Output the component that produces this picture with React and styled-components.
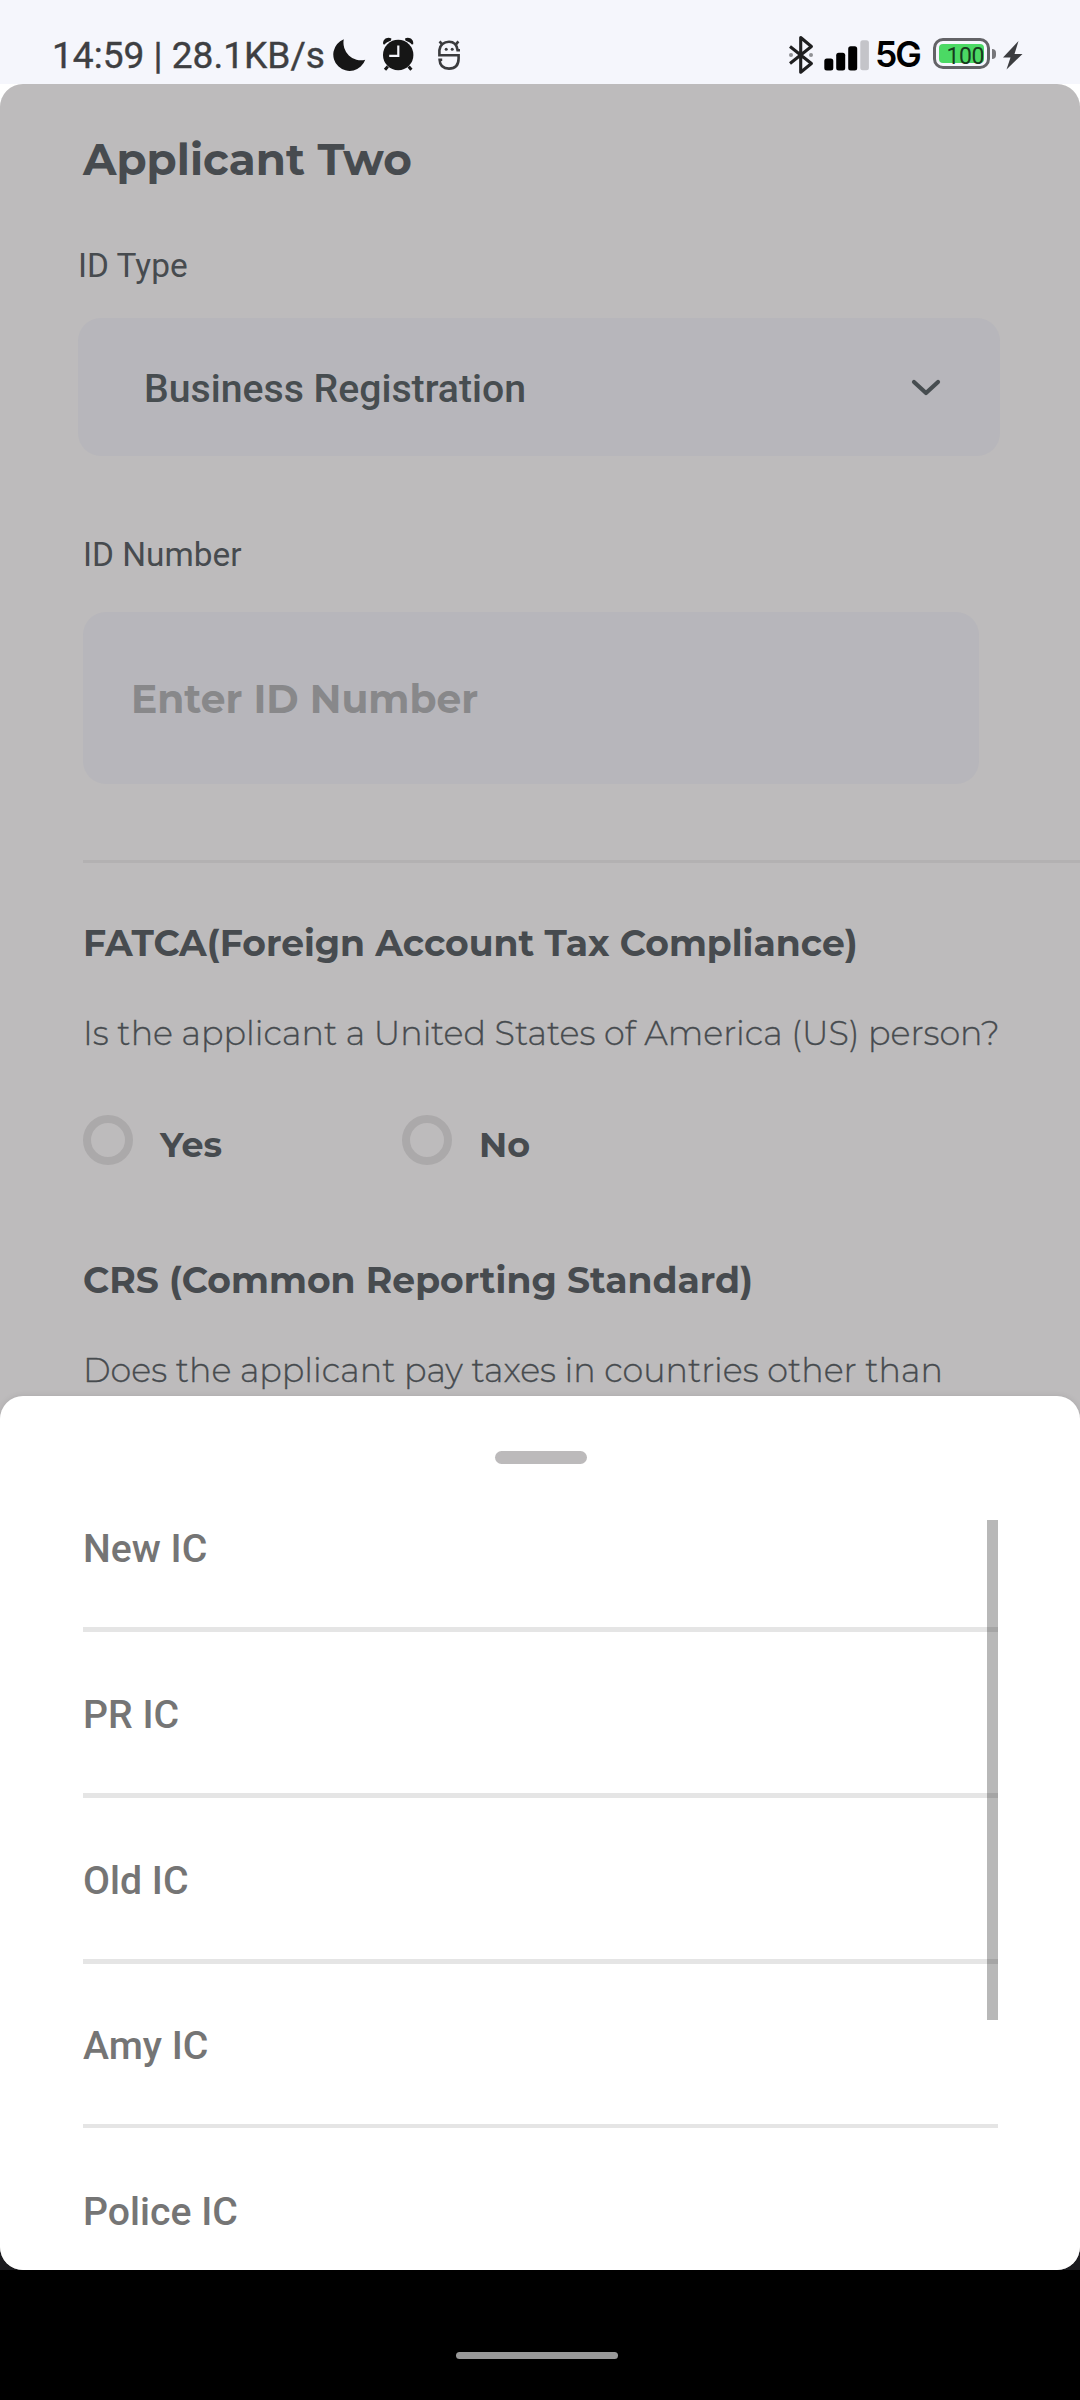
import React from "react";
import styled, { createGlobalStyle } from "styled-components";

const heading = `"Montserrat", Inter, sans-serif`;
const body = `Roboto, "Noto Sans", sans-serif`;
const ink = "#474b4f";

const Global = createGlobalStyle`
  * { box-sizing: border-box; }
  body { margin: 0; background: #000; font-family: ${body}; }
`;

const Phone = styled.div`
  width: 1080px;
  height: 2400px;
  display: flex;
  flex-direction: column;
  background: #000;
  overflow: hidden;
`;

/* ---------- status bar ---------- */

const StatusBar = styled.header`
  height: 84px;
  flex: none;
  display: flex;
  justify-content: space-between;
  padding: 0 56px 0 52px;
  background: #f5f6fc;
`;

const StatusGroup = styled.div`
  display: flex;
  align-items: flex-start;
`;

const Clock = styled.span`
  margin-top: 31px;
  width: 280px;
  font-size: 37.1px;
  line-height: 50px;
  color: #3e3f42;
  white-space: nowrap;
  -webkit-text-stroke: 0.4px #3e3f42;
`;

const Glyph = styled.svg`
  flex: none;
  display: block;
  margin-top: ${(p) => p.$top}px;
  margin-left: ${(p) => p.$gap || 0}px;
`;

const Network = styled.span`
  margin-top: 30px;
  margin-left: 5px;
  width: 58px;
  font: 600 35.5px/50px Inter, sans-serif;
  letter-spacing: -2px;
  color: #000;
`;

const Battery = styled.div`
  display: flex;
  align-items: center;
  margin-top: 38px;
`;

const BatteryShell = styled.div`
  width: 57px;
  height: 31px;
  padding: 3px;
  border: 3px solid #636367;
  border-radius: 10px;
`;

const BatteryFill = styled.div`
  width: 45px;
  height: 19px;
  border-radius: 4px;
  background: #4bd964;
  color: #173a1d;
  font-size: 23px;
  line-height: 25px;
  text-align: right;
  letter-spacing: -0.4px;
`;

const BatteryTip = styled.div`
  width: 4px;
  height: 10px;
  margin-left: 2px;
  border-radius: 0 4px 4px 0;
  background: #77777b;
`;

/* ---------- form ---------- */

const Stage = styled.main`
  height: 2186px;
  flex: none;
  background: linear-gradient(#fff 50%, #1c1c20 50%);
`;

const AppWindow = styled.div`
  height: 100%;
  display: flex;
  flex-direction: column;
  border-radius: 23px;
  overflow: hidden;
  background: #bdbbbc;
`;

const Form = styled.section`
  height: 1312px;
  flex: none;
  display: flex;
  flex-direction: column;
  align-items: flex-start;
  padding: 51px 0 0 83px;
  color: ${ink};
`;

const Title = styled.h1`
  margin: 0;
  font: 700 43.7px/50px ${heading};
  white-space: nowrap;
`;

const Label = styled.label`
  margin-top: ${(p) => p.$gap}px;
  margin-left: ${(p) => p.$shift || 0}px;
  font-size: 33.4px;
  line-height: 50px;
`;

const Select = styled.button`
  margin: 27px 0 0 -5px;
  width: 922px;
  height: 138px;
  border: 0;
  border-radius: 23px;
  padding: 3px 59px 0 66px;
  display: flex;
  align-items: center;
  justify-content: space-between;
  background: #b7b6bb;
  color: #474d50;
  font: 500 39.2px/50px ${body};
`;

const Field = styled.div`
  margin-top: 32px;
  width: 896px;
  height: 172px;
  border-radius: 23px;
  padding: 2px 0 0 48px;
  display: flex;
  align-items: center;
  background: #b7b6bb;
  color: #88888a;
  font: 700 39.2px/50px ${heading};
`;

const Divider = styled.hr`
  align-self: stretch;
  margin: 76px 0 0;
  height: 3px;
  border: 0;
  background: #b3b1b2;
`;

const Heading = styled.h2`
  margin: ${(p) => p.$gap}px 0 0;
  font: 700 36.13px/50px ${heading};
  white-space: nowrap;
`;

const Question = styled.p`
  margin: 40px 0 0;
  font: 300 33.36px/50px ${heading};
  white-space: nowrap;
  -webkit-text-stroke: 0.3px ${ink};
`;

const Radios = styled.div`
  margin-top: 57px;
  height: 50px;
  display: flex;
`;

const Radio = styled.div`
  width: 319px;
  display: flex;
  align-items: flex-start;
  gap: 27px;
  font: 700 34.9px/60px ${heading};
`;

const Ring = styled.span`
  width: 50px;
  height: 50px;
  border: 8px solid #aba9aa;
  border-radius: 50%;
`;

/* ---------- bottom sheet ---------- */

const Sheet = styled.section`
  flex: 1;
  min-height: 0;
  display: flex;
  flex-direction: column;
  border-radius: 23px 23px 0 0;
  background: #fff;
  box-shadow: 0 0 6px rgba(0, 0, 0, 0.1);
`;

const Handle = styled.div`
  width: 92px;
  height: 13px;
  flex: none;
  margin: 55px auto 56px 495px;
  border-radius: 6.5px;
  background: #bcbabb;
`;

const List = styled.ul`
  position: relative;
  width: 915px;
  margin: 0 0 0 83px;
  padding: 0;
  flex: 1;
  min-height: 0;
  overflow: hidden;
  list-style: none;
`;

const Option = styled.li`
  height: ${(p) => p.$height}px;
  padding-top: ${(p) => p.$pad}px;
  border-bottom: ${(p) => p.$line}px solid #e5e5e5;
  color: #757575;
  font: 500 39.2px/50px ${body};
`;

const Scrollbar = styled.div`
  position: absolute;
  top: 0;
  right: 0;
  width: 11px;
  height: 500px;
  background: rgba(0, 0, 0, 0.28);
`;

/* ---------- navigation ---------- */

const NavBar = styled.footer`
  flex: 1;
  display: flex;
  align-items: flex-start;
`;

const Pill = styled.div`
  width: 162px;
  height: 7px;
  margin: 82px 0 0 456px;
  border-radius: 3.5px;
  background: #999;
`;

const options = [
  { label: "New IC", height: 112, pad: 4, line: 5 },
  { label: "PR IC", height: 166, pad: 58, line: 5 },
  { label: "Old IC", height: 166, pad: 58, line: 5 },
  { label: "Amy IC", height: 164, pad: 57, line: 4 },
  { label: "Police IC", height: 142, pad: 59, line: 0 },
];

const MoonIcon = () => (
  <Glyph $top={38} width="34" height="34" viewBox="0 0 34 34">
    <path d="M11.8 1.2A16.4 16.4 0 1 0 33.2 21.8A17.6 17.6 0 0 1 11.8 1.2Z" fill="#161616" />
  </Glyph>
);

const AlarmIcon = () => (
  <Glyph $top={36} $gap={16} width="34" height="36" viewBox="0 0 34 36">
    <g fill="#161616">
      <circle cx="16.2" cy="19" r="15.2" />
      <path d="M1.2 8.2C.4 3.8 4.6 .4 9.4 2.4L9 4.6C6 5.8 4 7 2.6 8.6Z" />
      <path d="M31.2 8.2C32 3.8 27.8 .4 23 2.4L23.4 4.6C26.4 5.8 28.4 7 29.8 8.6Z" />
    </g>
    <path d="M5.8 30.6L3 33.8M26.6 30.6L29.4 33.8" stroke="#161616" strokeWidth="3" />
    <path d="M16.3 9.5V19.8H7.2" fill="none" stroke="#f5f6fc" strokeWidth="2.2" />
  </Glyph>
);

const RobotIcon = () => (
  <Glyph $top={38} $gap={20} width="26" height="34" viewBox="0 0 26 34">
    <g fill="none" stroke="#3a3b3e" strokeWidth="2.6">
      <path d="M24 12.2H21.6C20.8 6.6 18 3.8 13 3.8S3.8 7 3.4 12.2V17.2H22.6V20.5C22.6 27.3 19 30.6 13 30.6S3.8 27.3 3.6 21.8H6.2" />
      <path d="M6.4 6.8L3.6 3.4M19.6 6.8L22.4 3.4" />
    </g>
    <circle cx="10.2" cy="11.2" r="1.5" fill="#3a3b3e" />
    <circle cx="16.2" cy="11.2" r="1.5" fill="#3a3b3e" />
  </Glyph>
);

const BluetoothIcon = () => (
  <Glyph $top={34} width="26" height="42" viewBox="0 0 26 42">
    <path
      d="M2 12.5L23.4 29.5L12.7 38.2V3.5L23.4 12.5L2 29.5"
      fill="none"
      stroke="#1f1f20"
      strokeWidth="3.1"
      strokeLinejoin="round"
    />
    <circle cx="3" cy="21" r="2" fill="#8f9094" />
    <circle cx="23" cy="21" r="2" fill="#8f9094" />
  </Glyph>
);

const SignalIcon = () => (
  <Glyph $top={40} $gap={10} width="46" height="31" viewBox="0 0 46 31">
    <rect x="0.3" y="18.5" width="9" height="12" rx="2.5" fill="#000" />
    <rect x="12.2" y="12.8" width="9" height="17.7" rx="2.5" fill="#000" />
    <rect x="24.2" y="6.3" width="9" height="24.2" rx="2.5" fill="#000" />
    <rect x="36.3" y="0.2" width="8.6" height="30" rx="2.5" fill="#c4c4c9" />
  </Glyph>
);

const BoltIcon = () => (
  <Glyph $top={40} $gap={7} width="21" height="31" viewBox="0 0 21 31">
    <path d="M15.5 1L0 17.5H7.5L3.5 29.5L19.5 14H11.5Z" fill="#3c3d40" />
  </Glyph>
);

const ChevronIcon = () => (
  <svg width="30" height="20" viewBox="0 0 30 20">
    <path
      d="M3 3L15 14L27 3"
      fill="none"
      stroke="#474d50"
      strokeWidth="4.2"
      strokeLinecap="round"
      strokeLinejoin="round"
    />
  </svg>
);

export default function App() {
  return (
    <Phone>
      <Global />
      <StatusBar>
        <StatusGroup>
          <Clock>14:59 | 28.1KB/s</Clock>
          <MoonIcon />
          <AlarmIcon />
          <RobotIcon />
        </StatusGroup>
        <StatusGroup>
          <BluetoothIcon />
          <SignalIcon />
          <Network>5G</Network>
          <Battery>
            <BatteryShell>
              <BatteryFill>100</BatteryFill>
            </BatteryShell>
            <BatteryTip />
          </Battery>
          <BoltIcon />
        </StatusGroup>
      </StatusBar>

      <Stage>
        <AppWindow>
          <Form>
            <Title>Applicant Two</Title>
            <Label $gap={56} $shift={-5}>ID Type</Label>
            <Select>
              Business Registration
              <ChevronIcon />
            </Select>
            <Label $gap={74}>ID Number</Label>
            <Field>Enter ID Number</Field>
            <Divider />
            <Heading $gap={55}>FATCA(Foreign Account Tax Compliance)</Heading>
            <Question>Is the applicant a United States of America (US) person?</Question>
            <Radios>
              <Radio><Ring />Yes</Radio>
              <Radio><Ring />No</Radio>
            </Radios>
            <Heading $gap={90}>CRS (Common Reporting Standard)</Heading>
            <Question>Does the applicant pay taxes in countries other than</Question>
          </Form>

          <Sheet>
            <Handle />
            <List>
              {options.map((o) => (
                <Option key={o.label} $height={o.height} $pad={o.pad} $line={o.line}>
                  {o.label}
                </Option>
              ))}
              <Scrollbar />
            </List>
          </Sheet>
        </AppWindow>
      </Stage>

      <NavBar>
        <Pill />
      </NavBar>
    </Phone>
  );
}
